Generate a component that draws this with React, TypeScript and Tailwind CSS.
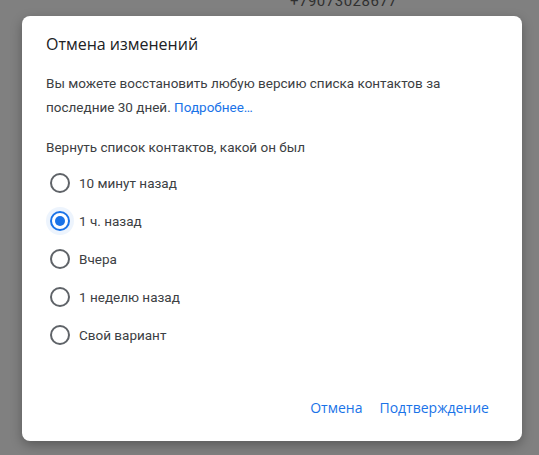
import React from "react";

const options = ["10 минут назад", "1 ч. назад", "Вчера", "1 неделю назад", "Свой вариант"];

export default function App() {
  const selected = 1;
  return (
    <div
      className="relative h-[455px] w-[539px] overflow-hidden bg-[#808080]"
      style={{ fontFamily: "Roboto, 'Noto Sans', Arial, sans-serif" }}
    >
      <div className="absolute left-[290px] top-[-9px] text-[15px] leading-[20px] tracking-[0.5px] text-[#303030]">
        +79073028677
      </div>
      <div className="ml-[22px] mt-[16px] flex h-[425px] w-[500px] flex-col rounded-[8px] bg-white pl-[24px] pr-[25px] pb-[16px] pt-[16px] shadow-[0_4px_12px_rgba(0,0,0,0.3)]">
        <h2
          className="text-[16px] leading-[24px] text-[#202124]"
          style={{ fontFamily: "'Open Sans', Roboto, sans-serif" }}
        >
          Отмена изменений
        </h2>
        <p className="mt-[15px] text-[13.5px] leading-[24px] text-[#3c4043]">
          Вы можете восстановить любую версию списка контактов за последние 30 дней.{" "}
          <span className="text-[#1a73e8]">Подробнее…</span>
        </p>
        <div className="mt-[16px] text-[13.5px] leading-[24px] text-[#3c4043]">
          Вернуть список контактов, какой он был
        </div>
        <div className="mt-[5px] flex flex-col">
          {options.map((o, i) => (
            <div key={o} className="flex h-[38px] items-center">
              <div className="ml-[4px] flex h-[20px] w-[20px] items-center justify-center">
                {i === selected ? (
                  <div className="flex h-[20px] w-[20px] items-center justify-center rounded-full border-2 border-[#1a73e8] shadow-[0_0_0_4px_rgba(26,115,232,0.08)]">
                    <div className="h-[10px] w-[10px] rounded-full bg-[#1a73e8]" />
                  </div>
                ) : (
                  <div className="h-[20px] w-[20px] rounded-full border-2 border-[#5f6368]" />
                )}
              </div>
              <span className="ml-[9px] text-[13.5px] text-[#3c4043]">{o}</span>
            </div>
          ))}
        </div>
        <div className="mt-auto flex justify-end gap-[1px]">
          <button
            className="h-[36px] rounded px-[8px] text-[14px] font-medium text-[#1a73e8]"
            style={{ fontFamily: "'Open Sans', Roboto, sans-serif" }}
          >
            Отмена
          </button>
          <button
            className="h-[36px] rounded px-[8px] text-[14px] font-medium text-[#1a73e8]"
            style={{ fontFamily: "'Open Sans', Roboto, sans-serif" }}
          >
            Подтверждение
          </button>
        </div>
      </div>
    </div>
  );
}
